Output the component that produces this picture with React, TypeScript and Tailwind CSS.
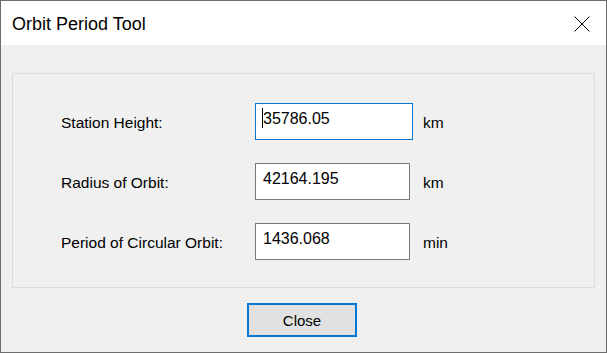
import React from 'react';

const rows = [
  { label: 'Station Height:', value: '35786.05', unit: 'km', focused: true },
  { label: 'Radius of Orbit:', value: '42164.195', unit: 'km', focused: false },
  { label: 'Period of Circular Orbit:', value: '1436.068', unit: 'min', focused: false },
];

export default function App() {
  return (
    <div
      className="w-[607px] h-[353px] flex flex-col border border-[#6d6d6d] bg-[#f0f0f0] text-black overflow-hidden"
      style={{ fontFamily: '"Liberation Sans", Arial, sans-serif' }}
    >
      {/* Title bar */}
      <div className="h-[44px] shrink-0 bg-white flex items-center justify-between pl-[11px] pr-[16px]">
        <span className="text-[18px] leading-none mt-[1px]">Orbit Period Tool</span>
        <svg width="16" height="16" viewBox="0 0 16 16" className="mt-[1px]">
          <path d="M0.5 0.5L15.5 15.5M15.5 0.5L0.5 15.5" stroke="#000" strokeWidth="1" fill="none" />
        </svg>
      </div>

      {/* Body */}
      <div className="flex-1 flex flex-col px-[11px] pt-[28px]">
        <div className="h-[215px] border border-[#dcdcdc] pt-[29px] pl-[48px] flex flex-col gap-[23px]">
          {rows.map((row) => (
            <div key={row.label} className="grid grid-cols-[194px_168px_auto] items-center h-[37px] text-[15.5px]">
              <span className="mt-[3px]">{row.label}</span>
              <div
                className={
                  row.focused
                    ? 'h-[37px] w-[158px] bg-white border border-[#0078d7] pl-[7px] pt-[6px] flex items-start'
                    : 'h-[37px] w-[155px] bg-white border border-[#7a7a7a] pl-[7px] pt-[6px] flex items-start'
                }
              >
                {row.focused && <span className="w-px h-[20px] bg-black -ml-[1px] -mt-[2px]" />}
                <span className="text-[16px] leading-[18px]">{row.value}</span>
              </div>
              <span className="mt-[3px]">{row.unit}</span>
            </div>
          ))}
        </div>

        <div className="flex justify-center pt-[15px] pr-[3px]">
          <button className="w-[110px] h-[34px] bg-[#e1e1e1] border-2 border-[#0078d7] text-[15px] leading-none">
            Close
          </button>
        </div>
      </div>
    </div>
  );
}
